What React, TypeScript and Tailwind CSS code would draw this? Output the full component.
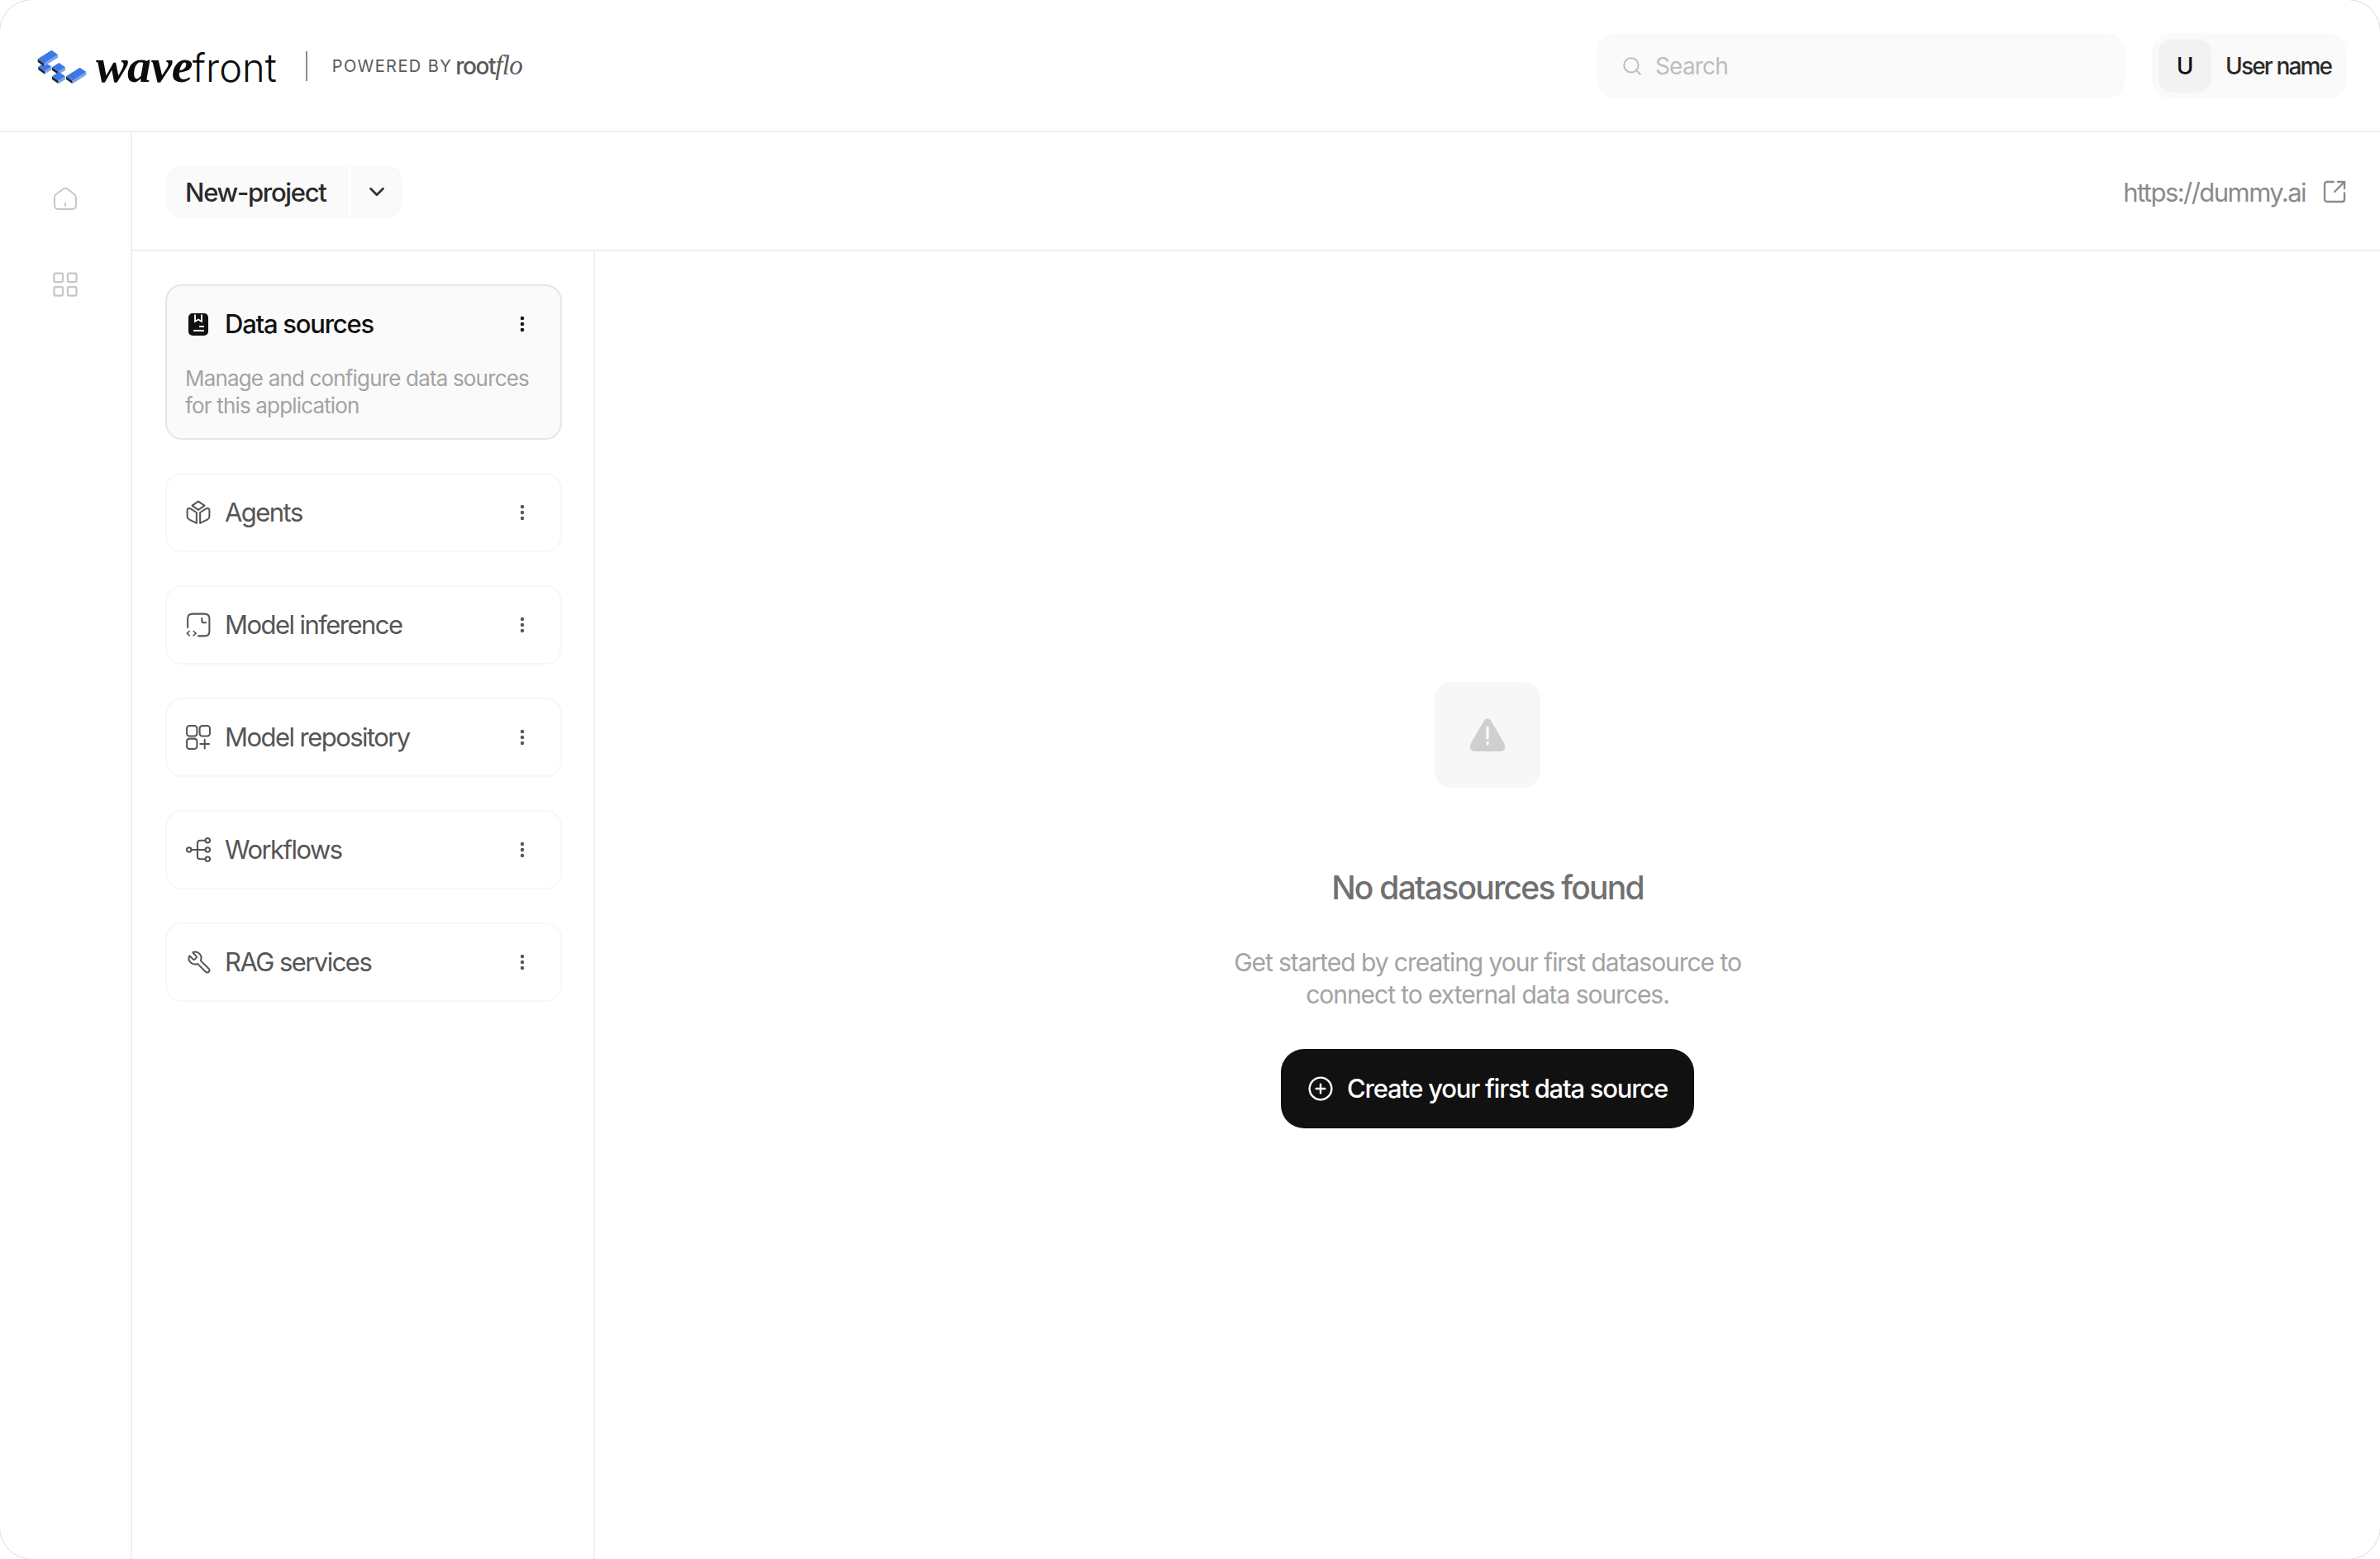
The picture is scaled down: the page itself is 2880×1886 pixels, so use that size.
import { ChevronDown, CirclePlus, EllipsisVertical, LayoutGrid, Search, SquareArrowOutUpRight, Wrench } from "lucide-react";
import type { ReactNode } from "react";

const U: [number, number] = [50, -32];
const V: [number, number] = [23, 16];

function Block({ x, y, u, v = 1 }: { x: number; y: number; u: number; v?: number }) {
  const t = [x + U[0] * u, y + U[1] * u];
  const b = [x + V[0] * v, y + V[1] * v];
  const r = [t[0] + V[0] * v, t[1] + V[1] * v];
  const h = 11;
  return (
    <g>
      <polygon points={`${x},${y} ${b[0]},${b[1]} ${b[0]},${b[1] + h} ${x},${y + h}`} fill="#23262e" />
      <polygon points={`${b[0]},${b[1]} ${r[0]},${r[1]} ${r[0]},${r[1] + h} ${b[0]},${b[1] + h}`} fill="#7ba3f0" />
      <polygon points={`${x},${y} ${t[0]},${t[1]} ${r[0]},${r[1]} ${b[0]},${b[1]}`} fill="#3d78e6" />
    </g>
  );
}

function Logo() {
  return (
    <svg width="62" height="42" viewBox="40 55 186 126" className="shrink-0">
      <Block x={47} y={120} u={0.5} />
      <Block x={45} y={92} u={1} />
      <Block x={97} y={122} u={0.5} />
      <Block x={97} y={155} u={0.5} />
      <Block x={148} y={155} u={1} />
    </svg>
  );
}

const base = { fill: "none", stroke: "#555555", strokeWidth: 1.9, strokeLinecap: "round", strokeLinejoin: "round" } as const;

function DataIcon() {
  return (
    <svg width="24" height="27" viewBox="0 0 24 27" className="shrink-0">
      <rect width="24" height="27" rx="5" fill="#111111" />
      <path d="M8 1.5V10L12 7.5L16 10V1.5" fill="none" stroke="#fff" strokeWidth="1.8" />
      <path d="M13 16H19M6 21H19" fill="none" stroke="#fff" strokeWidth="1.8" />
    </svg>
  );
}

function AgentIcon() {
  return (
    <svg width="30" height="30" viewBox="0 0 28 28" {...base} className="-ml-px shrink-0">
      <path d="M14 1.5L21 6.2L14 11L7 6.2Z" />
      <path d="M5 9.5L12 14V26L3.5 21.8Q1.5 20.8 1.5 18.5V11.5Q1.5 8.5 5 9.5Z" />
      <path d="M23 9.5L16 14V26L24.5 21.8Q26.5 20.8 26.5 18.5V11.5Q26.5 8.5 23 9.5Z" />
    </svg>
  );
}

function InferenceIcon() {
  return (
    <svg width="30" height="30" viewBox="0 0 28 28" {...base} className="-ml-px shrink-0">
      <path d="M2 17V7Q2 1.5 7.5 1.5H21Q26.5 1.5 26.5 7V21Q26.5 26.5 21 26.5H14" />
      <path d="M18 6.5V9Q18 11.5 20.5 11.5H22.5" />
      <path d="M4 21L1.2 23.5L4 26M8.5 21L11.3 23.5L8.5 26" strokeWidth="1.5" />
    </svg>
  );
}

function RepoIcon() {
  return (
    <svg width="30" height="30" viewBox="0 0 28 28" {...base} className="-ml-px shrink-0">
      <rect x="1" y="1" width="11.5" height="11.5" rx="3" />
      <rect x="15.5" y="1" width="11.5" height="11.5" rx="3" />
      <rect x="1" y="15.5" width="11.5" height="11.5" rx="3" />
      <path d="M21.2 16.5V26.5M16.2 21.5H26.2" />
    </svg>
  );
}

function FlowIcon() {
  return (
    <svg width="30" height="30" viewBox="0 0 28 28" {...base} className="-ml-px shrink-0">
      <circle cx="3.5" cy="14" r="2.6" />
      <circle cx="24.5" cy="3.5" r="2.6" />
      <circle cx="24.5" cy="14" r="2.6" />
      <circle cx="24.5" cy="24.5" r="2.6" />
      <path d="M6 14H22M22 3.5H16Q13 3.5 13 6.5V21.5Q13 24.5 16 24.5H22" />
    </svg>
  );
}

function HomeIcon() {
  return (
    <svg width="28" height="28" viewBox="0 0 28 28" fill="none" stroke="#c6c6c6" strokeWidth="1.9" strokeLinejoin="round" className="shrink-0">
      <path d="M11.5 2.5Q14 .8 16.5 2.5L25 9Q27 10.5 27 13V22Q27 27 22 27H6Q1 27 1 22V13Q1 10.5 3 9Z" />
      <path d="M14 20V23" strokeLinecap="round" />
    </svg>
  );
}

function Card({ icon, label }: { icon: ReactNode; label: string }) {
  return (
    <div className="flex h-24 items-center rounded-[20px] border-2 border-[#f7f7f7] pr-[34px] pl-[24px]">
      <div className="flex w-[46px] shrink-0 items-center">{icon}</div>
      <span className="flex-1 text-[31px] leading-[40px] tracking-[-0.05em] text-[#555555]">{label}</span>
      <EllipsisVertical size={24} strokeWidth={2.4} color="#555555" />
    </div>
  );
}

export default function App() {
  return (
    <div className="h-[1886px] w-[2880px] overflow-hidden bg-white font-['Inter',sans-serif]">
      <div className="-m-px flex h-[1888px] w-[2882px] flex-col overflow-hidden rounded-[40px] border border-[#dcdcdc]">
        <header className="flex h-[160px] shrink-0 items-center border-b-2 border-[#f0f0f0] pt-[2px] pr-10 pl-[44px]">
          <Logo />
          <div className="ml-[10px] flex items-baseline text-[#0c0c0c]">
            <span className="font-['Liberation_Serif',serif] text-[58px] leading-none font-bold tracking-[-0.01em] italic">wave</span>
            <span className="text-[47px] leading-none font-light tracking-normal">front</span>
          </div>
          <div className="mr-[30px] ml-[35px] h-[36px] w-[2px] bg-[#8c8c8c]" />
          <span className="text-[20px] tracking-[0.07em] text-[#5a5a5a]">POWERED BY</span>
          <div className="ml-[4px] flex items-baseline text-[#5a5a5a]">
            <span className="text-[28px] font-medium tracking-[-0.05em]">root</span>
            <span className="font-['Liberation_Serif',serif] text-[33px] tracking-[-0.02em] italic">flo</span>
          </div>
          <div className="ml-auto flex h-20 w-[640px] items-center gap-[15px] rounded-[24px] bg-[#fafafa] pl-[30px]">
            <Search size={26} strokeWidth={1.8} color="#bdbdbd" />
            <span className="text-[28px] tracking-[-0.03em] text-[#bdbdbd]">Search</span>
          </div>
          <div className="ml-[32px] flex h-20 w-[236px] items-center rounded-[24px] bg-[#fafafa] pl-2">
            <div className="flex size-16 items-center justify-center rounded-2xl bg-[#f2f2f2] text-[28px] font-medium text-[#111111]">U</div>
            <span className="ml-[17px] text-[28px] font-medium tracking-[-0.065em] text-[#2a2a2a]">User name</span>
          </div>
        </header>
        <div className="flex min-h-0 flex-1">
          <nav className="flex w-[160px] shrink-0 flex-col items-center gap-[72px] border-r-2 border-[#f0f0f0] pt-[66px]">
            <HomeIcon />
            <LayoutGrid size={36} strokeWidth={1.5} color="#c6c6c6" />
          </nav>
          <div className="flex min-w-0 flex-1 flex-col">
            <div className="flex h-[144px] shrink-0 items-center justify-between border-b-2 border-[#f0f0f0] pt-[2px] pr-10 pl-10">
              <div className="flex h-16 w-[288px] rounded-[20px] bg-[#fafafa]">
                <div className="flex w-[224px] items-center border-r-2 border-white pt-[3px] pl-6 text-[31px] font-medium tracking-[-0.042em] text-[#2a2a2a]">New-project</div>
                <div className="flex flex-1 items-center justify-center">
                  <ChevronDown size={30} strokeWidth={2.2} color="#333333" />
                </div>
              </div>
              <div className="flex items-center gap-[19px]">
                <span className="pt-[2px] text-[31px] tracking-[-0.05em] text-[#8a8a8a]">https://dummy.ai</span>
                <SquareArrowOutUpRight size={32} strokeWidth={1.8} color="#8a8a8a" className="-mr-px" />
              </div>
            </div>
            <div className="flex min-h-0 flex-1">
              <aside className="flex w-[560px] shrink-0 flex-col gap-10 border-r-2 border-[#f0f0f0] pt-10 pr-[38px] pl-10">
                <div className="flex h-[188px] flex-col rounded-[20px] border-2 border-[#e6e6e6] bg-[#fafafa] pt-[26px] pr-[34px] pl-[22px]">
                  <div className="flex items-center">
                    <div className="flex w-[48px] shrink-0 items-center pl-[4px]"><DataIcon /></div>
                    <span className="flex-1 text-[31px] leading-[40px] font-medium tracking-[-0.04em] text-[#111111]">Data sources</span>
                    <EllipsisVertical size={24} strokeWidth={2.6} color="#111111" />
                  </div>
                  <p className="mt-[29px] -mr-[10px] text-[26px] leading-[33px] tracking-[-0.032em] text-[#a3a3a3]">Manage and configure data sources for this application</p>
                </div>
                <Card icon={<AgentIcon />} label="Agents" />
                <Card icon={<InferenceIcon />} label="Model inference" />
                <Card icon={<RepoIcon />} label="Model repository" />
                <Card icon={<FlowIcon />} label="Workflows" />
                <Card icon={<Wrench size={30} strokeWidth={1.6} color="#555555" className="-scale-x-100" />} label="RAG services" />
              </aside>
              <main className="flex min-w-0 flex-1 flex-col items-center justify-center">
                <div className="flex size-[128px] items-center justify-center rounded-[20px] bg-[#f7f7f7]">
                  <svg width="44" height="42" viewBox="0 0 44 42">
                    <path d="M18 3.5Q22 -1 26 3.5L42 31Q46 41 36 41H8Q-2 41 2 31Z" fill="#cfcfcf" />
                    <path d="M22 12V25M22 30.5V32" stroke="#fff" strokeWidth="3" strokeLinecap="round" />
                  </svg>
                </div>
                <h2 className="mt-[96px] text-[39px] leading-[50px] font-medium tracking-[-0.045em] text-[#707070]">No datasources found</h2>
                <p className="mt-[46px] w-[640px] text-center text-[30px] leading-[39px] tracking-[-0.035em] text-[#a3a3a3]">Get started by creating your first datasource to connect to external data sources.</p>
                <button className="mt-[46px] flex h-24 w-[500px] items-center justify-center gap-[16px] rounded-[28px] bg-[#111111] text-[31px] font-medium tracking-[-0.04em] text-white">
                  <CirclePlus size={32} strokeWidth={1.8} />
                  Create your first data source
                </button>
              </main>
            </div>
          </div>
        </div>
      </div>
    </div>
  );
}
